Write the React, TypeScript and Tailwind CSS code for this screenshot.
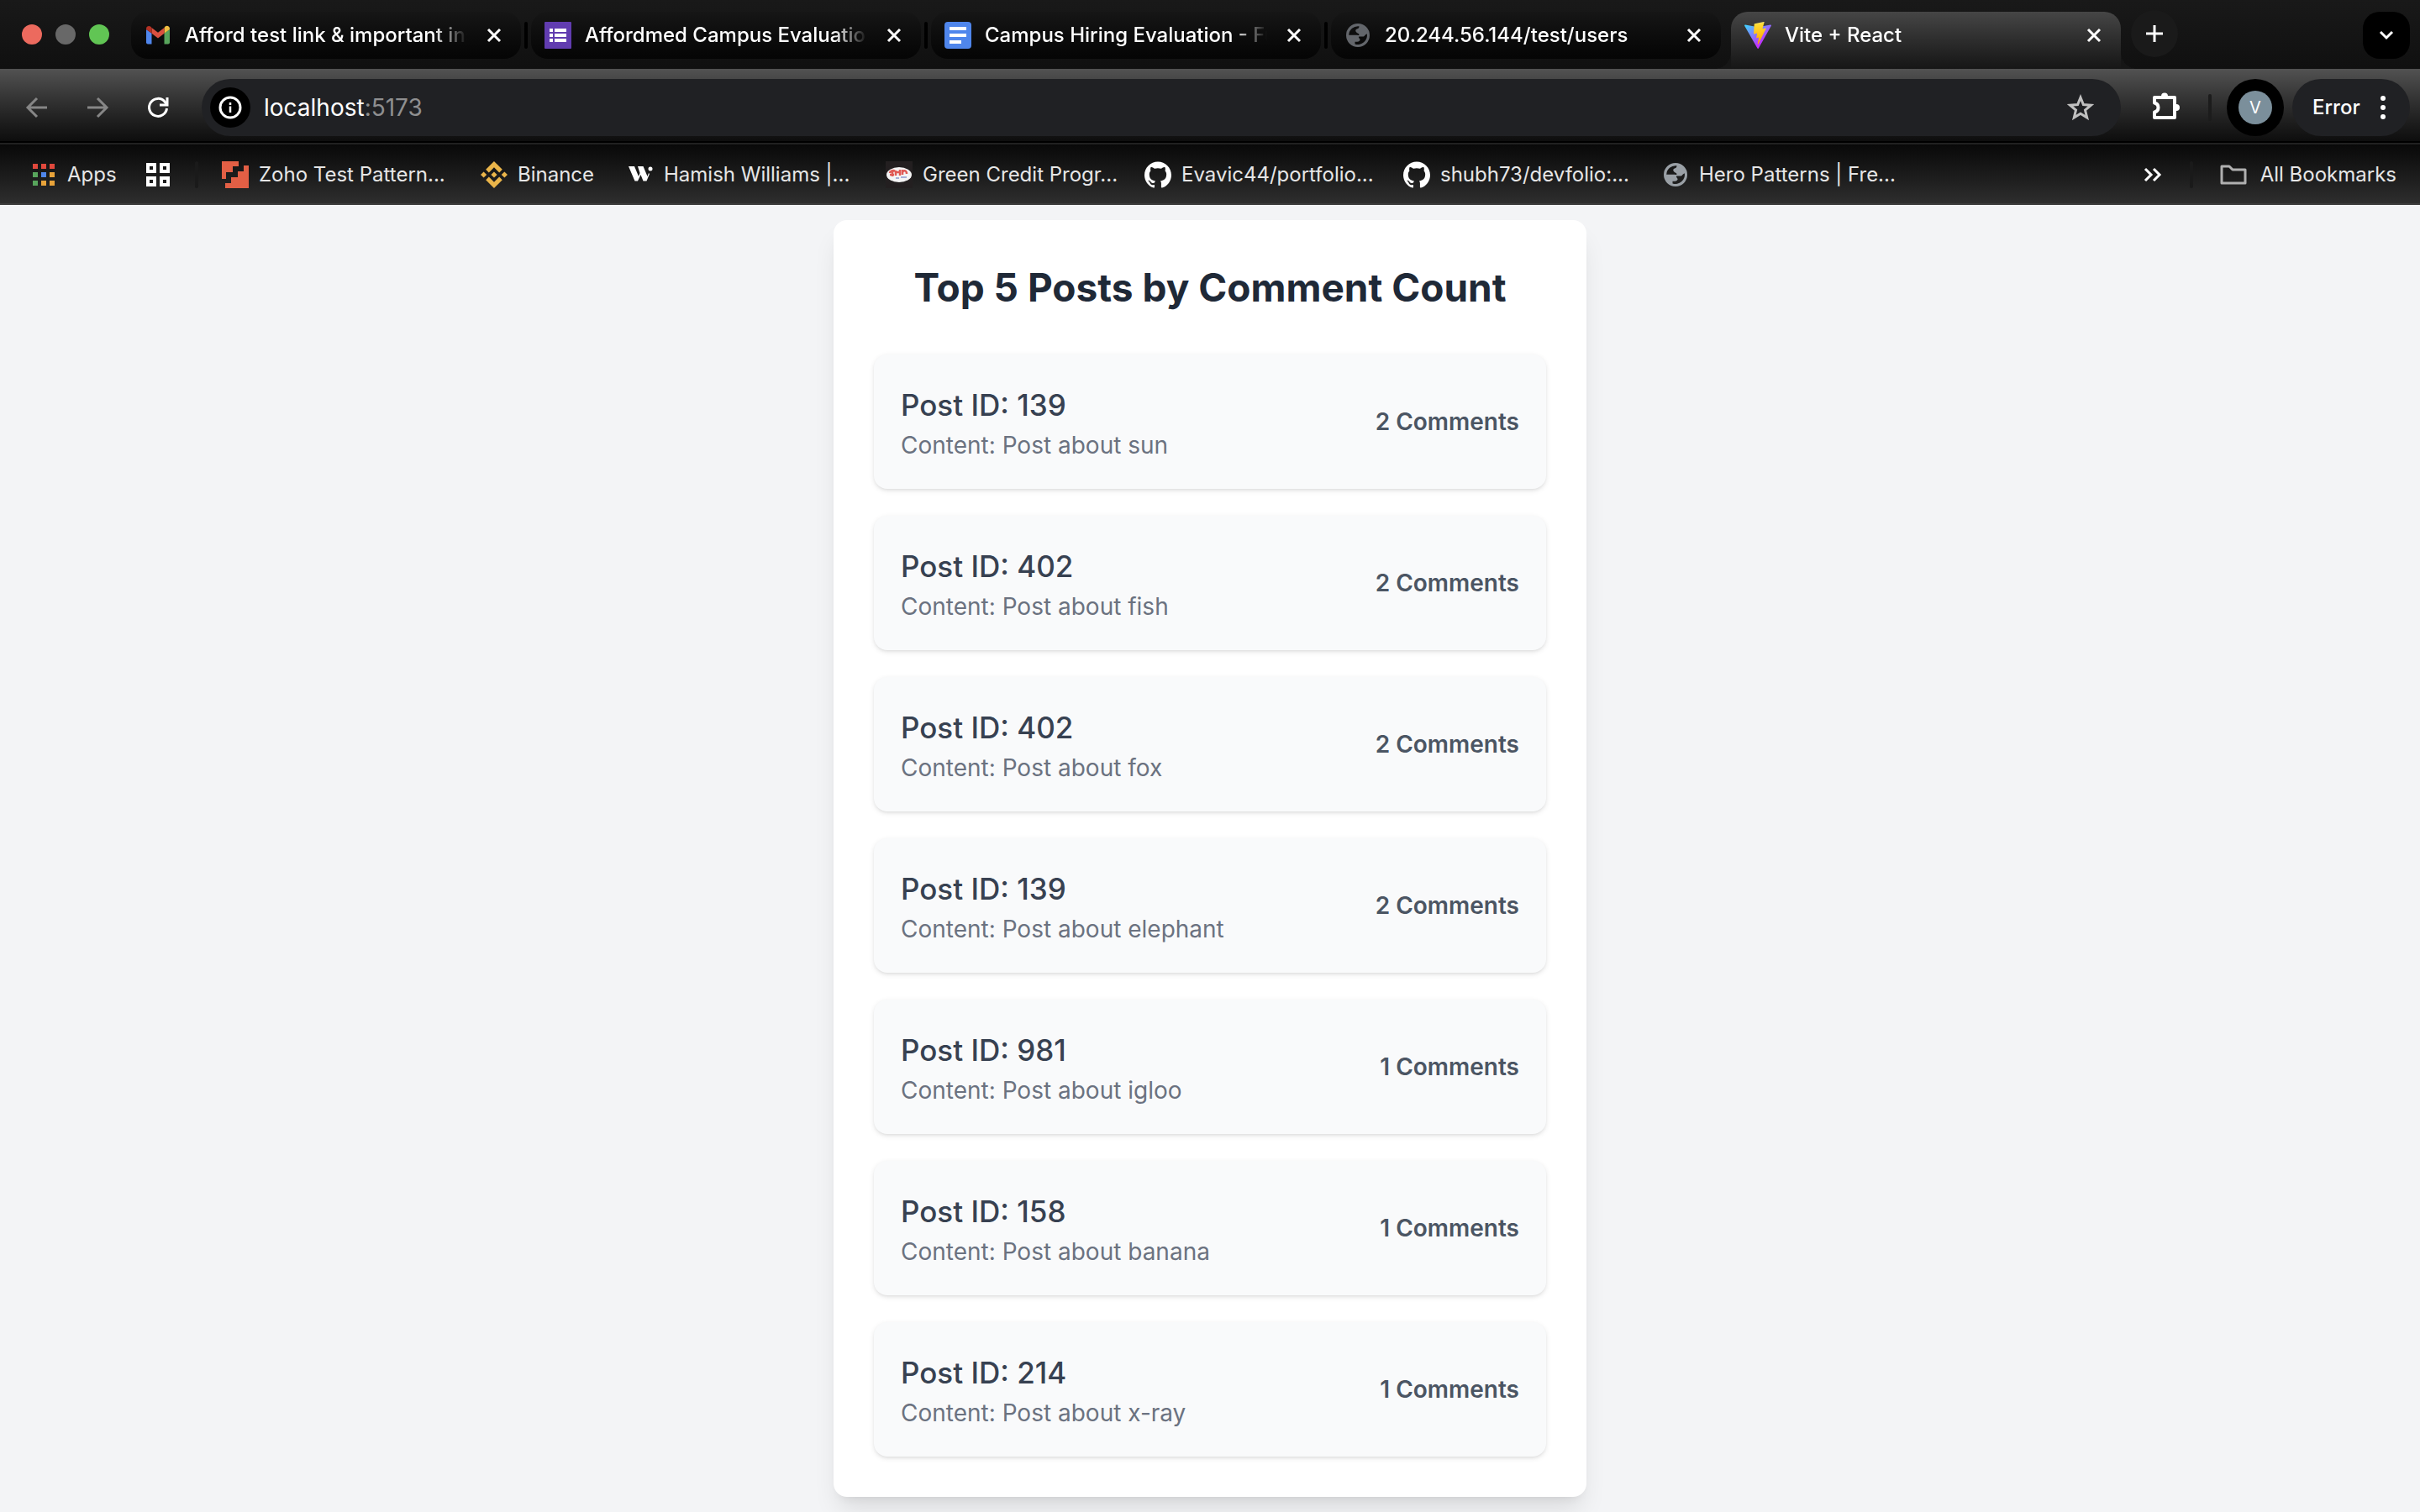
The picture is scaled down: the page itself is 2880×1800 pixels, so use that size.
import React from "react";
import { SiGithub, SiBinance } from "react-icons/si";

type IconProps = { className?: string };

function GmailIcon() {
  return (
    <svg viewBox="0 0 32 32" className="size-8 shrink-0" aria-hidden="true">
      <path d="M2 9v15.500a2 2 0 0 0 2 2h4.500V13.500z" fill="#4f86ec" />
      <path d="M23.500 13.500v13H28a2 2 0 0 0 2-2V9z" fill="#58a55c" />
      <path d="M23.500 7v6.700L30 9V8.200c0-2.900-3.200-4.400-5.400-2.700z" fill="#f1bf42" />
      <path d="M8.500 13.700V7l7.500 5.700L23.500 7v6.700L16 19.500z" fill="#d95040" />
      <path d="M2 8.200V9l6.500 4.700V7L7.400 5.800C5.200 4.100 2 5.500 2 8.200z" fill="#b33225" />
    </svg>
  );
}

function FormsIcon() {
  return (
    <svg viewBox="0 0 32 32" className="size-8 shrink-0" aria-hidden="true">
      <rect width="32" height="32" rx="1" fill="#613cb0" />
      <path d="M6 8h4v4H6zm6 0h14v4H12zM6 14h4v4H6zm6 0h14v4H12zM6 20h4v4H6zm6 0h14v4H12z" fill="#fff" />
    </svg>
  );
}

function DocsIcon() {
  return (
    <svg viewBox="0 0 32 32" className="size-8 shrink-0" aria-hidden="true">
      <rect width="32" height="32" rx="4" fill="#4f86ec" />
      <path d="M6 6h20v4H6zm0 8h20v4H6zm0 8h14v4H6z" fill="#fff" />
    </svg>
  );
}

function GlobeIcon({ className }: IconProps) {
  return (
    <svg viewBox="-2 -2 32 32" className={`size-8 shrink-0 ${className ?? ""}`} fill="currentColor" aria-hidden="true">
      <path
        fillRule="evenodd"
        d="M14 0a14 14 0 1 1 0 28a14 14 0 1 1 0-28z
           M3.200 13.800A10.900 10.900 0 0 1 15.500 3.300C15.500 5.500 14 6.300 12.300 6.800C10.800 7.500 11 9.500 12.300 10.500C13.500 11.800 15 11.500 15.500 13C15.800 14.500 13.500 13.800 11.500 13.800z
           M24.800 12.200A11 11 0 0 1 10.500 24.400V21.800C12.500 21.800 16 22 16.500 19.800C17 17.800 14.500 17.500 15 15.800C16.500 14.800 20 16.500 21.800 14.800C22.500 13.500 23.800 13 24.800 12.200z"
      />
    </svg>
  );
}

function ViteIcon() {
  return (
    <svg viewBox="0 0 256 257" className="size-8 shrink-0" aria-hidden="true">
      <defs>
        <linearGradient id="vite-a" x1="-.828%" x2="57.636%" y1="7.652%" y2="78.411%">
          <stop offset="0%" stopColor="#41D1FF" />
          <stop offset="100%" stopColor="#BD34FE" />
        </linearGradient>
        <linearGradient id="vite-b" x1="43.376%" x2="50.316%" y1="2.242%" y2="89.030%">
          <stop offset="0%" stopColor="#FFEA83" />
          <stop offset="8.333%" stopColor="#FFDD35" />
          <stop offset="100%" stopColor="#FFA800" />
        </linearGradient>
      </defs>
      <path
        fill="url(#vite-a)"
        d="M255.153 37.938L134.897 252.976c-2.483 4.440-8.862 4.466-11.382.048L.875 37.958c-2.746-4.814 1.371-10.646 6.827-9.670l120.385 21.517a6.537 6.537 0 0 0 2.322-.004l117.867-21.483c5.438-.991 9.574 4.796 6.877 9.620Z"
      />
      <path
        fill="url(#vite-b)"
        d="M185.432.063L96.440 17.501a3.268 3.268 0 0 0-2.634 3.014l-5.474 92.456a3.268 3.268 0 0 0 3.997 3.378l24.777-5.718c2.318-.535 4.413 1.507 3.936 3.838l-7.361 36.047c-.495 2.426 1.782 4.500 4.151 3.780l15.304-4.649c2.372-.720 4.652 1.360 4.150 3.788l-11.698 56.621c-.732 3.542 3.979 5.473 5.943 2.437l1.313-2.028l72.516-144.720c1.215-2.423-.880-5.186-3.540-4.672l-25.505 4.922c-2.396.462-4.435-1.770-3.759-4.114l16.646-57.705c.677-2.350-1.370-4.583-3.769-4.113Z"
      />
    </svg>
  );
}

function CloseIcon() {
  return (
    <svg viewBox="0 0 32 32" className="size-8" fill="none" stroke="currentColor" strokeWidth="3" aria-hidden="true">
      <path d="M9 9l14 14M23 9L9 23" />
    </svg>
  );
}

const tabs = [
  { title: "Afford test link & important ins", icon: <GmailIcon />, active: false, line: true },
  { title: "Affordmed Campus Evaluation", icon: <FormsIcon />, active: false, line: true },
  { title: "Campus Hiring Evaluation - Fu", icon: <DocsIcon />, active: false, line: true },
  { title: "20.244.56.144/test/users", icon: <GlobeIcon className="text-[#63666b]" />, active: false, line: false },
  { title: "Vite + React", icon: <ViteIcon />, active: true, line: false },
];

function TabStrip() {
  return (
    <div className="flex h-[82px] bg-linear-to-b from-[#191919] to-[#101010] pl-[26px] pr-3">
      <div className="flex w-[130px] shrink-0 items-center gap-4">
        <button type="button" aria-label="Close window" className="size-6 rounded-full bg-[#ec6a5e]" />
        <button type="button" aria-label="Minimize window" className="size-6 rounded-full bg-[#686868]" />
        <button type="button" aria-label="Zoom window" className="size-6 rounded-full bg-[#61c554]" />
      </div>
      <div role="tablist" className="flex min-w-0 gap-3 pt-[14px]">
        {tabs.map((tab) => (
          <div
            key={tab.title}
            className={
              tab.active
                ? "relative flex h-[68px] w-[464px] items-start rounded-t-[20px] bg-linear-to-b from-[#464646] to-[#161616] px-4"
                : "relative flex h-14 w-[464px] items-start rounded-[20px] bg-linear-to-b from-[#161616] to-[#050505] px-4"
            }
          >
            <button
              type="button"
              role="tab"
              aria-selected={tab.active}
              className="flex h-14 min-w-0 flex-1 items-center gap-4 text-left text-white"
            >
              {tab.icon}
              <span className="min-w-0 flex-1 overflow-hidden whitespace-nowrap text-2xl font-medium mask-r-from-88% mask-r-to-100%">
                {tab.title}
              </span>
            </button>
            <button type="button" aria-label={`Close ${tab.title}`} className="ml-4 flex h-14 items-center text-white">
              <CloseIcon />
            </button>
            {tab.line && <span className="absolute -right-2 top-3 h-8 w-1 rounded-full bg-black" />}
            {tab.active && (
              <>
                <span className="absolute bottom-0 -left-5 size-5 bg-[radial-gradient(circle_at_0_0,transparent_20px,#161616_20px)]" />
                <span className="absolute bottom-0 -right-5 size-5 bg-[radial-gradient(circle_at_100%_0,transparent_20px,#161616_20px)]" />
              </>
            )}
          </div>
        ))}
      </div>
      <button
        type="button"
        aria-label="New tab"
        className="mt-3 ml-3 flex size-14 shrink-0 items-center justify-center rounded-full bg-[#1a1a1a] text-white"
      >
        <svg viewBox="0 0 32 32" className="size-8" fill="none" stroke="currentColor" strokeWidth="3" aria-hidden="true">
          <path d="M16 6v20M6 16h20" />
        </svg>
      </button>
      <button
        type="button"
        aria-label="Search tabs"
        className="mt-[14px] ml-auto flex size-14 shrink-0 items-center justify-center rounded-[20px] bg-black text-white"
      >
        <svg viewBox="0 0 32 32" className="size-8" fill="none" stroke="currentColor" strokeWidth="3" aria-hidden="true">
          <path d="M9 12l7 7 7-7" />
        </svg>
      </button>
    </div>
  );
}

function Toolbar() {
  return (
    <div className="flex h-[90px] items-start border-b-2 border-[#212121] bg-linear-to-b from-[#525252] to-[#0c0c0c] pt-3 pr-3 pl-6 shadow-[inset_0_-2px_0_#000]">
      <div className="flex h-[68px] w-[216px] shrink-0 items-center gap-8">
        <button type="button" aria-label="Back" className="text-[#868686]">
          <svg viewBox="0 0 40 40" className="size-10" fill="none" stroke="currentColor" strokeWidth="3" aria-hidden="true">
            <path d="M32 20H10M20 9L9 20l11 11" />
          </svg>
        </button>
        <button type="button" aria-label="Forward" className="text-[#868686]">
          <svg viewBox="0 0 40 40" className="size-10" fill="none" stroke="currentColor" strokeWidth="3" aria-hidden="true">
            <path d="M8 20h22M20 9l11 11-11 11" />
          </svg>
        </button>
        <button type="button" aria-label="Reload" className="text-white">
          <svg viewBox="0 0 40 40" className="size-10" fill="none" stroke="currentColor" strokeWidth="3" aria-hidden="true">
            <path d="M30.500 21A10.500 10.500 0 1 1 28 13l2 2.500" />
            <path d="M31 8v9h-9" />
          </svg>
        </button>
      </div>
      <div className="flex h-[68px] min-w-0 flex-1 items-center rounded-full bg-[#202124] pr-7 pl-[10px]">
        <button
          type="button"
          aria-label="View site information"
          className="flex size-12 shrink-0 items-center justify-center rounded-full bg-black text-white"
        >
          <svg viewBox="0 0 28 28" className="size-7" fill="none" stroke="currentColor" strokeWidth="3" aria-hidden="true">
            <circle cx="14" cy="14" r="12" />
            <path d="M14 12.500v7.500M14 8v3" strokeWidth="2.500" />
          </svg>
        </button>
        <button type="button" aria-label="Address" className="ml-4 flex-1 text-left text-[28px] leading-10 text-white">
          localhost<span className="text-[#8f8f90]">:5173</span>
        </button>
        <button type="button" aria-label="Bookmark this tab" className="text-[#c0c0c0]">
          <svg viewBox="0 0 40 40" className="size-10" fill="none" stroke="currentColor" strokeWidth="3" aria-hidden="true">
            <path d="M20 8l3.400 8.500 9.100.7-7 5.900 2.200 8.900-7.700-4.800-7.700 4.800 2.200-8.900-7-5.900 9.100-.7z" />
          </svg>
        </button>
      </div>
      <div className="flex h-[68px] shrink-0 items-center">
        <button type="button" aria-label="Extensions" className="ml-[34px] text-white">
          <svg viewBox="0 0 40 40" className="size-10" fill="none" stroke="currentColor" strokeWidth="4" strokeLinejoin="round" aria-hidden="true">
            <path d="M6 8h24v24H6v-6.500c6-1.500 6-9.500 0-11z" />
            <path d="M14 6.500a4 4 0 0 1 8 0zM32 16a4 4 0 0 1 0 8z" fill="currentColor" stroke="none" />
          </svg>
        </button>
        <span className="mx-[30px] h-8 w-1 rounded-full bg-[#1c1c1c]" />
        <button
          type="button"
          aria-label="Profile V"
          className="-ml-3 flex size-[68px] items-center justify-center rounded-full bg-black"
        >
          <span className="flex size-10 items-center justify-center rounded-full bg-[#7b8f9b] text-xl text-white">V</span>
        </button>
        <button
          type="button"
          className="ml-[10px] flex h-[68px] w-[140px] items-center justify-between rounded-full bg-[#202124] pr-5 pl-6 text-2xl font-medium text-white"
        >
          Error
          <svg viewBox="0 0 24 32" className="h-8 w-6" fill="currentColor" aria-hidden="true">
            <circle cx="12" cy="5" r="3" />
            <circle cx="12" cy="16" r="3" />
            <circle cx="12" cy="27" r="3" />
          </svg>
        </button>
      </div>
    </div>
  );
}

function ZohoIcon() {
  return (
    <svg viewBox="0 0 32 32" className="size-8 shrink-0" fill="#e25f45" aria-hidden="true">
      <path d="M0 0h20v6h-7v7H5v8H0z" />
      <path d="M26 5h6v27H4v-6h7v-7h8v-7h7z" />
    </svg>
  );
}

function HamishIcon() {
  return (
    <svg viewBox="0 0 32 32" className="size-8 shrink-0" fill="#fff" aria-hidden="true">
      <path d="M2 6h7l5 12 1.500-4L13 6h6.500l5 12L26 14l1 1-3.500 8.500h-4L16.500 16 13 23.500H9.500z" />
      <circle cx="28" cy="9" r="2.500" />
    </svg>
  );
}

function GreenCreditIcon() {
  return (
    <svg viewBox="0 0 32 32" className="size-8 shrink-0" aria-hidden="true">
      <rect width="32" height="32" fill="#231f20" />
      <ellipse cx="16" cy="16" rx="15" ry="9" fill="#f4f4f4" />
      <path
        d="M5 14c0-2 4-4 6-2M8 12v6M12 11v6M12 13h4M17 10v7M20 10v6M20 13c2-3 5-2 5 2M5 16h5"
        fill="none"
        stroke="#e05a55"
        strokeWidth="2.500"
      />
      <path d="M12 20h4M18 19h7" stroke="#a7b0d8" strokeWidth="2" />
    </svg>
  );
}

const bookmarks = [
  { title: "Zoho Test Pattern...", icon: <ZohoIcon />, wide: true },
  { title: "Binance", icon: <SiBinance className="size-8 shrink-0 text-[#eab54a]" aria-hidden="true" />, wide: false },
  { title: "Hamish Williams |...", icon: <HamishIcon />, wide: true },
  { title: "Green Credit Progr...", icon: <GreenCreditIcon />, wide: true },
  { title: "Evavic44/portfolio...", icon: <SiGithub className="size-8 shrink-0 text-white" aria-hidden="true" />, wide: true },
  { title: "shubh73/devfolio:...", icon: <SiGithub className="size-8 shrink-0 text-white" aria-hidden="true" />, wide: true },
  { title: "Hero Patterns | Fre...", icon: <GlobeIcon className="text-[#9aa0a6]" />, wide: true },
];

const appDots = [
  "#e0483c", "#e0483c", "#e0483c",
  "#58a55c", "#4f86ec", "#e8a33a",
  "#58a55c", "#e8a33a", "#e8a33a",
];

function BookmarksBar() {
  return (
    <nav
      aria-label="Bookmarks"
      className="flex h-[72px] items-center border-b-2 border-[#3c3c3c] bg-linear-to-b from-[#090909] to-[#2e2e2e] pt-0.5 pr-7 pl-9 text-2xl text-[#e6e6e6]"
    >
      <a href="#apps" className="flex w-[136px] shrink-0 items-center gap-3">
        <svg viewBox="0 0 32 32" className="size-8" aria-hidden="true">
          {appDots.map((color, i) => (
            <rect key={i} x={3 + (i % 3) * 10} y={3 + Math.floor(i / 3) * 10} width="6" height="6" fill={color} />
          ))}
        </svg>
        Apps
      </a>
      <button type="button" aria-label="Tab groups" className="shrink-0 text-white">
        <svg viewBox="0 0 32 32" className="size-8" fill="none" stroke="currentColor" strokeWidth="4" aria-hidden="true">
          <path d="M4 4h8v8H4zM20 4h8v8h-8zM4 20h8v8H4zM20 20h8v8h-8z" />
        </svg>
      </button>
      <span className="mx-7 h-8 w-1 shrink-0 rounded-full bg-[#1a1a1a]" />
      <div className="flex min-w-0 flex-1 overflow-hidden">
        {bookmarks.map((b) => (
          <a
            key={b.title}
            href="#bookmark"
            className={
              b.wide
                ? "flex w-[308px] shrink-0 items-center gap-3 whitespace-nowrap"
                : "flex w-[174px] shrink-0 items-center gap-3 whitespace-nowrap"
            }
          >
            {b.icon}
            {b.title}
          </a>
        ))}
      </div>
      <button type="button" aria-label="More bookmarks" className="shrink-0 text-white">
        <svg viewBox="0 0 32 32" className="size-8" fill="none" stroke="currentColor" strokeWidth="3" aria-hidden="true">
          <path d="M7 9l7 7-7 7M17 9l7 7-7 7" />
        </svg>
      </button>
      <span className="mr-8 ml-7 h-8 w-1 shrink-0 rounded-full bg-[#1a1a1a]" />
      <a href="#all" className="flex shrink-0 items-center gap-4">
        <svg viewBox="0 0 32 32" className="size-8 text-[#b0b0b0]" fill="none" stroke="currentColor" strokeWidth="3" strokeLinejoin="round" aria-hidden="true">
          <path d="M2 6h9l4 4h15v16H2z" />
        </svg>
        All Bookmarks
      </a>
    </nav>
  );
}

const posts = [
  { id: 139, content: "Post about sun", comments: 2 },
  { id: 402, content: "Post about fish", comments: 2 },
  { id: 402, content: "Post about fox", comments: 2 },
  { id: 139, content: "Post about elephant", comments: 2 },
  { id: 981, content: "Post about igloo", comments: 1 },
  { id: 158, content: "Post about banana", comments: 1 },
  { id: 214, content: "Post about x-ray", comments: 1 },
];

function TopPosts() {
  return (
    <main className="flex flex-1 items-center justify-center bg-gray-100 py-[18px]">
      <section className="w-full max-w-4xl rounded-2xl bg-white p-12 shadow-[0_20px_30px_-6px_rgba(0,0,0,0.1),0_8px_12px_-8px_rgba(0,0,0,0.1)]">
        <h1 className="mb-12 text-center text-[46px] leading-16 font-bold text-[#1f2937]">Top 5 Posts by Comment Count</h1>
        <ul className="flex flex-col gap-8">
          {posts.map((post) => (
            <li
              key={post.content}
              className="flex items-center justify-between rounded-2xl bg-[#f9fafb] p-8 shadow-[0_2px_6px_0_rgba(0,0,0,0.1),0_2px_4px_-2px_rgba(0,0,0,0.1)]"
            >
              <div>
                <h2 className="text-[35px] leading-14 font-medium text-[#374151]">Post ID: {post.id}</h2>
                <p className="text-[28px] leading-10 text-[#6b7280]">Content: {post.content}</p>
              </div>
              <span className="text-[28px] leading-10 font-semibold text-[#4b5563]">{post.comments} Comments</span>
            </li>
          ))}
        </ul>
      </section>
    </main>
  );
}

export default function App() {
  return (
    <div className="flex min-h-screen flex-col bg-gray-100 font-['Inter',sans-serif]">
      <header>
        <TabStrip />
        <Toolbar />
        <BookmarksBar />
      </header>
      <TopPosts />
    </div>
  );
}
